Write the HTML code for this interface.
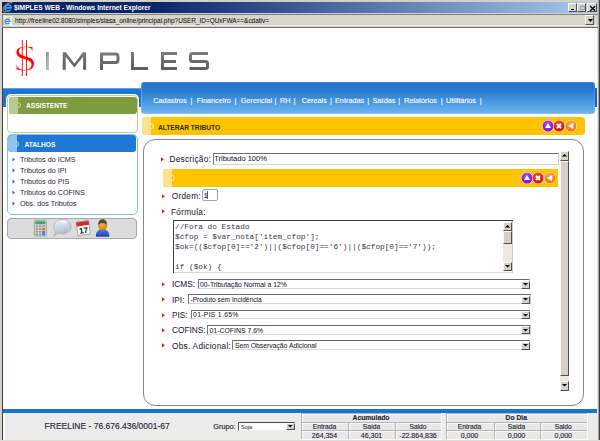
<!DOCTYPE html>
<html><head><meta charset="utf-8">
<style>
*{box-sizing:border-box}
html,body{margin:0;padding:0;width:600px;height:441px;overflow:hidden;background:#d4d0c8;font-family:"Liberation Sans",sans-serif}
.a{position:absolute}
.t{position:absolute;white-space:pre;line-height:1}
.d{-webkit-text-stroke:0.15px currentColor}
.wb{background:#d4d0c8;border-top:1px solid #fafafa;border-left:1px solid #fafafa;border-right:1px solid #505050;border-bottom:1px solid #505050}
</style></head><body>
<!-- window chrome -->
<div class="a" style="left:0;top:0;width:600px;height:441px;background:#d4d0c8"></div>
<div class="a" style="left:2px;top:2px;width:596px;height:11px;background:linear-gradient(to right,#0a246a 0%,#0a246a 25%,#a6caf0 100%)"></div>
<!-- title icon -->
<svg class="a" style="left:0.8px;top:1px" width="12" height="12" viewBox="0 0 12 12">
  <path d="M3.9 6.9H10.1A3.1 3.1 0 1 0 9.4 8.9" fill="none" stroke="#3a9cf0" stroke-width="1.7"/>
  <path d="M11.3 1.6C8 1.2 2.6 3.8 2.1 8.6C1.9 10.8 3.4 11.6 5.2 11" fill="none" stroke="#e8a818" stroke-width="0.9"/>
</svg>
<div class="t" style="left:14px;top:4.5px;font-size:6.7px;font-weight:bold;color:#fff">$IMPLES WEB - Windows Internet Explorer</div>
<!-- caption buttons -->
<div class="a wb" style="left:568px;top:3px;width:9px;height:9px"><div class="a" style="left:1.5px;top:4.6px;width:3.5px;height:1.3px;background:#000"></div></div>
<div class="a wb" style="left:577px;top:3px;width:9px;height:9px"><div class="a" style="left:1.5px;top:1.5px;width:5px;height:4.5px;border:1px solid #a0a0a0;border-top-width:1.5px"></div></div>
<div class="a wb" style="left:587px;top:3px;width:10px;height:9px"><svg class="a" style="left:0.5px;top:0.5px" width="8" height="7" viewBox="0 0 8 7"><path d="M1.3 1.3L6.2 5.7M6.2 1.3L1.3 5.7" stroke="#000" stroke-width="1.3"/></svg></div>
<!-- address bar -->
<div class="a" style="left:2px;top:14px;width:596px;height:1px;background:#808080"></div>
<div class="a" style="left:2px;top:14px;width:1px;height:13px;background:#808080"></div>
<div class="a" style="left:3px;top:15px;width:594px;height:10px;background:#d8d5ce"></div>
<div class="a" style="left:3px;top:25px;width:594px;height:1px;background:#eeece6"></div>
<div class="a" style="left:2px;top:26.5px;width:596px;height:1.5px;background:#707070"></div>
<div class="a" style="left:4px;top:16px;width:8px;height:9px;background:#f4f4f4"></div>
<svg class="a" style="left:2px;top:16px" width="10" height="10" viewBox="0 0 10 10">
  <path d="M3.2 5.3H7.8A2.4 2.4 0 1 0 7.3 6.9" fill="none" stroke="#3090e8" stroke-width="1.3"/>
  <path d="M8.8 1.6C6.2 1.3 2.2 3.2 1.7 6.9C1.5 8.6 2.7 9.2 4.1 8.8" fill="none" stroke="#e8a818" stroke-width="0.8"/>
</svg>
<div class="t" style="left:15px;top:18.1px;font-size:6.43px;color:#111;-webkit-text-stroke:0.05px #111">http://freeline02:8080/simples/siasa_online/principal.php?USER_ID=QUxFWA==&amp;cdativ=</div>
<div class="a wb" style="left:585px;top:15px;width:9px;height:10px"><svg class="a" style="left:1.5px;top:3px" width="5" height="3" viewBox="0 0 5 3"><path d="M0 0H5L2.5 3z" fill="#000"/></svg></div>
<!-- page area -->
<div class="a" style="left:2px;top:28px;width:1px;height:412px;background:#404040"></div>
<div class="a" style="left:3px;top:28px;width:594px;height:412px;background:#fff"></div>
<div class="a" style="left:597px;top:28px;width:1px;height:412px;background:#e8e5de"></div><div class="a" style="left:598px;top:0px;width:1px;height:441px;background:#a8a8a8"></div><div class="a" style="left:599px;top:0px;width:1px;height:441px;background:#404040"></div>
<div class="a" style="left:0;top:440px;width:600px;height:1px;background:#dedbd3"></div>

<!-- CONTENT -->
<!-- logo -->
<svg class="a" style="left:14px;top:38px" width="200" height="40" viewBox="14 38 200 40">
  <defs>
    <linearGradient id="lg" x1="0" y1="0" x2="0" y2="1"><stop offset="0" stop-color="#7a7a7a"/><stop offset="1" stop-color="#5e5e5e"/></linearGradient>
    <linearGradient id="lgi" x1="0" y1="0" x2="1" y2="1"><stop offset="0" stop-color="#909090"/><stop offset="1" stop-color="#c8c8c8"/></linearGradient>
  </defs>
  <!-- dollar -->
  <rect x="46" y="52" width="3" height="18" fill="url(#lgi)"/>
  <path d="M62.7 69.7V52.3H65.9L74.4 63.6L82.9 52.3H86.1V69.7H83.1V56.8L74.4 67.6L65.7 56.8V69.7Z" fill="url(#lg)"/>
  <g fill="none" stroke="url(#lg)" stroke-width="3" stroke-linejoin="miter">
    
    <path d="M101.5 70V54H115.5Q118 54 118 56.5V60Q118 62.5 115.5 62.5H101.5"/>
    <path d="M132.5 52V68.5H148"/>
    <path d="M177 53.5H162.5V68.5H177M162.5 61.5H176"/>
    <path d="M208 53.5H192.5Q190.5 53.5 190.5 55.5V59.5Q190.5 61.5 192.5 61.5H205.5Q207.5 61.5 207.5 63.5V66.5Q207.5 68.5 205.5 68.5H189.5"/>
  </g>
</svg>

<div class="t" style="left:13.2px;top:40px;font-family:&quot;Liberation Serif&quot;,serif;font-size:37px;color:#f00;-webkit-text-stroke:0.85px #fff;paint-order:normal;transform:scaleX(1.18);transform-origin:0 0">S</div>
<svg class="a" style="left:0;top:0" width="40" height="80"><path d="M22.3 40V76M26.5 40V76" stroke="#ff0000" stroke-width="0.9" fill="none"/></svg>
<!-- sidebar -->
<div class="a" style="left:3px;top:88px;width:138px;height:19px;background:#1e74d2;border-top:1.5px solid #64a0dc"></div>
<div class="a" style="left:6px;top:94px;width:133px;height:40px;background:#fff;border-radius:5px"></div>
<div class="a" style="left:7px;top:95px;width:131px;height:38px;border:1px solid #c6cc9c;border-radius:4px;background:#fff"></div>
<div class="a" style="left:9px;top:96.5px;width:127.5px;height:17.6px;background:#7d9c3b;border-radius:3px"></div>
<div class="a" style="left:9px;top:96.5px;width:9px;height:17.6px;background:#b9ca8c;border-radius:3px 0 0 3px"></div>
<div class="a" style="left:15px;top:102px;width:6px;height:6px;border:1px solid #d6e0b4;border-radius:50%;clip-path:inset(0 0 0 50%)"></div>
<div class="t" style="left:26px;top:103.2px;font-size:6.6px;font-weight:bold;color:#fff">ASSISTENTE</div>

<div class="a" style="left:7px;top:134px;width:131px;height:81px;border:1px solid #8cbcec;border-radius:5px;background:#fff"></div>
<div class="a" style="left:7.6px;top:135.3px;width:128.9px;height:17.2px;background:#1f78d6;border-radius:4px 3px 3px 3px"></div>
<div class="a" style="left:7.6px;top:135.3px;width:9.2px;height:17.2px;background:#8ec2f0;border-radius:4px 0 0 3px"></div>
<div class="a" style="left:13px;top:141px;width:6px;height:6px;border:1px solid #b4d6f4;border-radius:50%;clip-path:inset(0 0 0 50%)"></div>
<div class="t" style="left:24.5px;top:142px;font-size:6.6px;font-weight:bold;color:#fff">ATALHOS</div>
<div id="atalhos"><svg class="a" style="left:11.5px;top:156.7px" width="4" height="5"><path d="M0.5 0.5L3 2.5L0.5 4.5z" fill="#1f6fd0"/></svg><div class="t" style="left:20px;top:155.7px;font-size:7.2px;color:#2c2438">Tributos do ICMS</div><svg class="a" style="left:11.5px;top:167.7px" width="4" height="5"><path d="M0.5 0.5L3 2.5L0.5 4.5z" fill="#1f6fd0"/></svg><div class="t" style="left:20px;top:166.7px;font-size:7.2px;color:#2c2438">Tributos do IPI</div><svg class="a" style="left:11.5px;top:178.5px" width="4" height="5"><path d="M0.5 0.5L3 2.5L0.5 4.5z" fill="#1f6fd0"/></svg><div class="t" style="left:20px;top:177.5px;font-size:7.2px;color:#2c2438">Tributos do PIS</div><svg class="a" style="left:11.5px;top:189.7px" width="4" height="5"><path d="M0.5 0.5L3 2.5L0.5 4.5z" fill="#1f6fd0"/></svg><div class="t" style="left:20px;top:188.7px;font-size:7.2px;color:#2c2438">Tributos do COFINS</div><svg class="a" style="left:11.5px;top:200.5px" width="4" height="5"><path d="M0.5 0.5L3 2.5L0.5 4.5z" fill="#1f6fd0"/></svg><div class="t" style="left:20px;top:199.5px;font-size:7.2px;color:#2c2438">Obs. dos Tributos</div></div>

<!-- toolbar -->
<div class="a" style="left:7px;top:218px;width:130px;height:20.5px;background:#dcdcdc;border:1px solid #a8a8a8;border-radius:4px"></div>
<div id="icons"><svg class="a" style="left:30px;top:216px" width="84" height="24" viewBox="30 216 84 24">
<defs>
<linearGradient id="bub" x1="0" y1="0" x2="0.3" y2="1"><stop offset="0" stop-color="#f4f8fc"/><stop offset="0.6" stop-color="#c4d2e0"/><stop offset="1" stop-color="#a8b8c8"/></linearGradient>
<linearGradient id="usr" x1="0" y1="0" x2="0" y2="1"><stop offset="0" stop-color="#4a80e8"/><stop offset="1" stop-color="#1a40b0"/></linearGradient>
<radialGradient id="hd" cx="0.45" cy="0.4" r="0.6"><stop offset="0" stop-color="#f8b040"/><stop offset="1" stop-color="#d07810"/></radialGradient>
</defs>
<!-- calculator -->
<rect x="34.3" y="220.2" width="12" height="15.8" rx="1" fill="#d4d4d4" stroke="#8a8a8a" stroke-width="0.7"/>
<rect x="35.3" y="221.3" width="10" height="3" rx="0.8" fill="#30b060"/>
<g fill="#9a9a9a">
<rect x="35.6" y="225.4" width="2.4" height="1.8"/><rect x="38.9" y="225.4" width="2.4" height="1.8"/><rect x="42.2" y="225.4" width="2.6" height="1.8"/>
<rect x="35.6" y="228.1" width="2.4" height="1.8"/><rect x="38.9" y="228.1" width="2.4" height="1.8"/>
<rect x="35.6" y="230.8" width="2.4" height="1.8"/><rect x="38.9" y="230.8" width="2.4" height="1.8"/>
<rect x="35.6" y="233.5" width="2.4" height="1.8"/><rect x="38.9" y="233.5" width="2.4" height="1.8"/>
</g>
<rect x="42.2" y="228" width="2.8" height="2" fill="#f07010"/>
<rect x="42.2" y="230.7" width="2.8" height="4.7" fill="#5080d0"/>
<!-- bubble -->
<path d="M62.5 219.3C67.3 219.3 71 222.5 71 226.6C71 230.7 67.3 233.9 62.5 233.9C61 233.9 59.6 233.6 58.4 233.1L53.8 236.2L55.6 231.7C54.6 230.3 54 228.5 54 226.6C54 222.5 57.7 219.3 62.5 219.3Z" fill="url(#bub)" stroke="#d0a090" stroke-width="0.8"/>
<ellipse cx="64" cy="222" rx="3" ry="1.3" fill="#fff" opacity="0.7"/>
<!-- calendar -->
<g transform="rotate(-8 83 228)">
<rect x="77" y="221.5" width="12.5" height="13.5" fill="#fafafa" stroke="#808080" stroke-width="0.6"/>
<rect x="77" y="221.5" width="12.5" height="4.2" fill="#d42a2a"/>
<rect x="78.8" y="219.8" width="0.9" height="3" fill="#909090"/><rect x="86.6" y="219.8" width="0.9" height="3" fill="#909090"/>
<text x="83.3" y="233.3" font-family="Liberation Sans" font-weight="bold" font-size="8" text-anchor="middle" fill="#111">17</text>
</g>
<!-- user -->
<path d="M95.8 236.8C95.8 232 98 229.3 102.6 229.3C107.2 229.3 109.4 232 109.4 236.8Z" fill="url(#usr)"/>
<circle cx="102.6" cy="226.2" r="4.3" fill="url(#hd)"/>
<path d="M98.1 225.3C98.1 221.2 100 219.2 102.6 219.2C105.2 219.2 107.1 221.2 107.1 225.3C106 223.5 104.5 223 102.6 223C100.7 223 99.2 223.5 98.1 225.3Z" fill="#4a4a4a"/>
</svg></div>

<!-- nav -->
<div class="a" style="left:141px;top:82px;width:454px;height:32.4px;border-radius:3px;box-shadow:inset 1px 0 rgba(255,255,255,0.25),inset -1px 0 rgba(255,255,255,0.15);background:linear-gradient(#4a8ad8 0px,#2676cd 1.5px,#2a7ad0 9px,#68b3ee 30.4px,#a4cef2 32.4px)"></div>
<div class="a" style="left:595px;top:88px;width:2px;height:19px;background:#1a64be"></div>
<div id="nav"><div class="t" style="left:153.3px;top:96.7px;font-size:7.3px;color:#fff;-webkit-text-stroke:0.12px #fff">Cadastros</div><div class="t" style="left:190.5px;top:96.7px;font-size:7.3px;color:#fff;-webkit-text-stroke:0.12px #fff">|</div><div class="t" style="left:196.8px;top:96.7px;font-size:7.3px;color:#fff;-webkit-text-stroke:0.12px #fff">Financeiro</div><div class="t" style="left:234.5px;top:96.7px;font-size:7.3px;color:#fff;-webkit-text-stroke:0.12px #fff">|</div><div class="t" style="left:240.8px;top:96.7px;font-size:7.3px;color:#fff;-webkit-text-stroke:0.12px #fff">Gerencial</div><div class="t" style="left:274.5px;top:96.7px;font-size:7.3px;color:#fff;-webkit-text-stroke:0.12px #fff">|</div><div class="t" style="left:280px;top:96.7px;font-size:7.3px;color:#fff;-webkit-text-stroke:0.12px #fff">RH</div><div class="t" style="left:293.5px;top:96.7px;font-size:7.3px;color:#fff;-webkit-text-stroke:0.12px #fff">|</div><div class="t" style="left:301.7px;top:96.7px;font-size:7.3px;color:#fff;-webkit-text-stroke:0.12px #fff">Cereais</div><div class="t" style="left:330.0px;top:96.7px;font-size:7.3px;color:#fff;-webkit-text-stroke:0.12px #fff">|</div><div class="t" style="left:335px;top:96.7px;font-size:7.3px;color:#fff;-webkit-text-stroke:0.12px #fff">Entradas</div><div class="t" style="left:367.3px;top:96.7px;font-size:7.3px;color:#fff;-webkit-text-stroke:0.12px #fff">|</div><div class="t" style="left:372.7px;top:96.7px;font-size:7.3px;color:#fff;-webkit-text-stroke:0.12px #fff">Saídas</div><div class="t" style="left:398.3px;top:96.7px;font-size:7.3px;color:#fff;-webkit-text-stroke:0.12px #fff">|</div><div class="t" style="left:404px;top:96.7px;font-size:7.3px;color:#fff;-webkit-text-stroke:0.12px #fff">Relatórios</div><div class="t" style="left:440.7px;top:96.7px;font-size:7.3px;color:#fff;-webkit-text-stroke:0.12px #fff">|</div><div class="t" style="left:446px;top:96.7px;font-size:7.3px;color:#fff;-webkit-text-stroke:0.12px #fff">Utilitários</div><div class="t" style="left:479.7px;top:96.7px;font-size:7.3px;color:#fff;-webkit-text-stroke:0.12px #fff">|</div></div>

<!-- yellow title bar -->
<div class="a" style="left:142px;top:117px;width:443px;height:17.5px;background:#ffc400;border-radius:4px"></div>
<div class="a" style="left:142px;top:117px;width:9px;height:17.5px;background:#ffe08c;border-radius:4px 0 0 4px"></div>
<div class="a" style="left:148px;top:123px;width:6px;height:6px;border:1px solid #fff0c0;border-radius:50%;clip-path:inset(0 0 0 50%)"></div>
<div class="t" style="left:158px;top:125.2px;font-size:6.6px;font-weight:bold;color:#2a2a2a">ALTERAR TRIBUTO</div>
<div id="ic1"><svg class="a" style="left:540.5px;top:119.3px" width="14" height="14" viewBox="-7 -7 14 14"><defs><radialGradient id="g547126" cx="0.45" cy="0.3" r="0.75"><stop offset="0" stop-color="#b850ff"/><stop offset="1" stop-color="#7008c8"/></radialGradient></defs><circle r="6.1" fill="#fff8c8"/><circle r="5.5" fill="url(#g547126)"/><path d="M-3 2H3L0 -2.8z" fill="#fff"/></svg><svg class="a" style="left:552.3px;top:119.3px" width="14" height="14" viewBox="-7 -7 14 14"><defs><radialGradient id="g559126" cx="0.45" cy="0.3" r="0.75"><stop offset="0" stop-color="#ff4a3a"/><stop offset="1" stop-color="#c80e0e"/></radialGradient></defs><circle r="6.1" fill="#fff8c8"/><circle r="5.5" fill="url(#g559126)"/><path d="M-2 -2L2 2M2 -2L-2 2" stroke="#fff" stroke-width="1.8"/></svg><svg class="a" style="left:564.1px;top:119.3px" width="14" height="14" viewBox="-7 -7 14 14"><defs><radialGradient id="g571126" cx="0.45" cy="0.3" r="0.75"><stop offset="0" stop-color="#ffa848"/><stop offset="1" stop-color="#f06a0a"/></radialGradient></defs><circle r="6.1" fill="#fff8c8"/><circle r="5.5" fill="url(#g571126)"/><path d="M2.2 -2.9V2.9L-2.9 0z" fill="#fff"/></svg></div>

<!-- main box -->
<div class="a" style="left:142.5px;top:139px;width:441.5px;height:266.5px;border:1.5px solid #888;border-radius:12px;background:#fff"></div>
<div id="main"><div class="a" style="left:560px;top:150.5px;width:9px;height:240px;background:#ece9e2"></div><div class="a wb" style="left:560px;top:150.5px;width:9px;height:10px"></div><svg class="a" style="left:562.0px;top:154.2px" width="5" height="3"><path d="M0 2.6H5L2.5 0z" fill="#000"/></svg><div class="a wb" style="left:560px;top:160.5px;width:9px;height:215px"></div><div class="a wb" style="left:560px;top:380.5px;width:9px;height:10px"></div><svg class="a" style="left:562.0px;top:384.2px" width="5" height="3"><path d="M0 0H5L2.5 2.6z" fill="#000"/></svg><svg class="a" style="left:161.2px;top:156.70px" width="4" height="5"><path d="M0 0.2L2.8 2.3L0 4.4z" fill="#e81010"/></svg><div class="t" style="left:169.4px;top:155.15px;font-size:8.3px;letter-spacing:0.25px;color:#26243a;-webkit-text-stroke:0.05px #26243a">Descrição:</div><div class="a" style="left:212.5px;top:153.3px;width:346.0px;height:11.399999999999977px;background:#fff;border-top:1.5px solid #6a6a6a;border-left:1px solid #7a7a7a;border-bottom:1px solid #d8d8d8;border-right:1px solid #c8c8c8"></div><div class="t" style="left:214.2px;top:155.20px;font-size:7.5px;color:#202030;-webkit-text-stroke:0.05px #202030">Tributado 100%</div><div class="a" style="left:163px;top:169px;width:395px;height:18px;background:#ffc400;border-radius:3px 0 0 3px"></div><div class="a" style="left:163px;top:169px;width:8.5px;height:18px;background:#ffe08c;border-radius:3px 0 0 3px"></div><div class="a" style="left:168.5px;top:175px;width:6px;height:6px;border:1px solid #fff0c0;border-radius:50%;clip-path:inset(0 0 0 50%)"></div><div id="ic2"><svg class="a" style="left:519.7px;top:171px" width="14" height="14" viewBox="-7 -7 14 14"><defs><radialGradient id="g526178" cx="0.45" cy="0.3" r="0.75"><stop offset="0" stop-color="#b850ff"/><stop offset="1" stop-color="#7008c8"/></radialGradient></defs><circle r="6.1" fill="#fff8c8"/><circle r="5.5" fill="url(#g526178)"/><path d="M-3 2H3L0 -2.8z" fill="#fff"/></svg><svg class="a" style="left:531.35px;top:171px" width="14" height="14" viewBox="-7 -7 14 14"><defs><radialGradient id="g538178" cx="0.45" cy="0.3" r="0.75"><stop offset="0" stop-color="#ff4a3a"/><stop offset="1" stop-color="#c80e0e"/></radialGradient></defs><circle r="6.1" fill="#fff8c8"/><circle r="5.5" fill="url(#g538178)"/><path d="M-2 -2L2 2M2 -2L-2 2" stroke="#fff" stroke-width="1.8"/></svg><svg class="a" style="left:543.0px;top:171px" width="14" height="14" viewBox="-7 -7 14 14"><defs><radialGradient id="g550178" cx="0.45" cy="0.3" r="0.75"><stop offset="0" stop-color="#ffa848"/><stop offset="1" stop-color="#f06a0a"/></radialGradient></defs><circle r="6.1" fill="#fff8c8"/><circle r="5.5" fill="url(#g550178)"/><path d="M2.2 -2.9V2.9L-2.9 0z" fill="#fff"/></svg></div><svg class="a" style="left:162.2px;top:193.50px" width="4" height="5"><path d="M0 0.2L2.8 2.3L0 4.4z" fill="#e81010"/></svg><div class="t" style="left:171.7px;top:191.95px;font-size:8.3px;letter-spacing:0.25px;color:#26243a;-webkit-text-stroke:0.05px #26243a">Ordem:</div><div class="a" style="left:202px;top:189.3px;width:15.6px;height:11.8px;background:#fff;border:1.2px solid #a4a4a4;border-radius:2px"></div><div class="t" style="left:203.7px;top:192.3px;font-size:7.5px;color:#2a2838;-webkit-text-stroke:0.15px #2a2838">1</div><div class="a" style="left:207.4px;top:191px;width:0.9px;height:7.7px;background:#606060"></div><svg class="a" style="left:162.2px;top:209.40px" width="4" height="5"><path d="M0 0.2L2.8 2.3L0 4.4z" fill="#e81010"/></svg><div class="t" style="left:171px;top:207.85px;font-size:8.3px;letter-spacing:0.25px;color:#26243a;-webkit-text-stroke:0.05px #26243a">Fórmula:</div><div class="a" style="left:173.3px;top:220.4px;width:339.90000000000003px;height:52.20000000000002px;background:#fff;border-top:1.5px solid #6a6a6a;border-left:1px solid #7a7a7a;border-bottom:1px solid #d8d8d8;border-right:1px solid #c8c8c8"></div><div class="a" style="left:173.3px;top:220.4px;width:339.9px;height:52.2px;border-top:1px solid #404040;border-left:1px solid #404040"></div><div class="t" style="left:175px;top:224.40px;font-family:'Liberation Mono',monospace;font-size:7.78px;color:#383848">//Fora do Estado</div><div class="t" style="left:175px;top:234.28px;font-family:'Liberation Mono',monospace;font-size:7.78px;color:#383848">$cfop = $var_nota['item_cfop'];</div><div class="t" style="left:175px;top:244.15px;font-family:'Liberation Mono',monospace;font-size:7.78px;color:#383848">$ok=(($cfop[0]=='2')||($cfop[0]=='6')||($cfop[0]=='7'));</div><div class="t" style="left:175px;top:254.02px;font-family:'Liberation Mono',monospace;font-size:7.78px;color:#383848"></div><div class="t" style="left:175px;top:263.90px;font-family:'Liberation Mono',monospace;font-size:7.78px;color:#383848">if ($ok) {</div><div class="a" style="left:503px;top:222px;width:9px;height:49px;background:#ece9e2"></div><div class="a wb" style="left:503px;top:222px;width:9px;height:9px"></div><svg class="a" style="left:505.0px;top:225.2px" width="5" height="3"><path d="M0 2.6H5L2.5 0z" fill="#000"/></svg><div class="a wb" style="left:503px;top:231px;width:9px;height:13px"></div><div class="a wb" style="left:503px;top:262px;width:9px;height:9px"></div><svg class="a" style="left:505.0px;top:265.2px" width="5" height="3"><path d="M0 0H5L2.5 2.6z" fill="#000"/></svg><svg class="a" style="left:162.2px;top:281.70px" width="4" height="5"><path d="M0 0.2L2.8 2.3L0 4.4z" fill="#e81010"/></svg><div class="t" style="left:172px;top:280.15000000000003px;font-size:8.3px;letter-spacing:0px;color:#26243a;-webkit-text-stroke:0.05px #26243a">ICMS:</div><div class="a" style="left:197.6px;top:279.2px;width:332.9px;height:9.600000000000023px;background:#fff;border-top:1.5px solid #6a6a6a;border-left:1px solid #7a7a7a;border-bottom:1px solid #d8d8d8;border-right:1px solid #c8c8c8"></div><div class="t" style="left:200.1px;top:281.90px;font-size:6.8px;color:#202030;-webkit-text-stroke:0.05px #202030">00-Tributação Normal a 12%</div><div class="a wb" style="left:521px;top:280.5px;width:8.7px;height:8px"></div><svg class="a" style="left:522.85px;top:283.2px" width="5" height="3"><path d="M0 0H5L2.5 2.6z" fill="#000"/></svg><svg class="a" style="left:162.2px;top:297.30px" width="4" height="5"><path d="M0 0.2L2.8 2.3L0 4.4z" fill="#e81010"/></svg><div class="t" style="left:172px;top:295.75000000000006px;font-size:8.3px;letter-spacing:0px;color:#26243a;-webkit-text-stroke:0.05px #26243a">IPI:</div><div class="a" style="left:188px;top:294.3px;width:342.5px;height:9.600000000000023px;background:#fff;border-top:1.5px solid #6a6a6a;border-left:1px solid #7a7a7a;border-bottom:1px solid #d8d8d8;border-right:1px solid #c8c8c8"></div><div class="t" style="left:190.5px;top:297.00px;font-size:6.6px;color:#202030;-webkit-text-stroke:0.05px #202030">-Produto sem Incidência</div><div class="a wb" style="left:521px;top:295.6px;width:8.7px;height:8px"></div><svg class="a" style="left:522.85px;top:298.3px" width="5" height="3"><path d="M0 0H5L2.5 2.6z" fill="#000"/></svg><svg class="a" style="left:162.2px;top:312.50px" width="4" height="5"><path d="M0 0.2L2.8 2.3L0 4.4z" fill="#e81010"/></svg><div class="t" style="left:172px;top:310.95000000000005px;font-size:8.3px;letter-spacing:0px;color:#26243a;-webkit-text-stroke:0.05px #26243a">PIS:</div><div class="a" style="left:190.6px;top:309.6px;width:339.9px;height:9.600000000000023px;background:#fff;border-top:1.5px solid #6a6a6a;border-left:1px solid #7a7a7a;border-bottom:1px solid #d8d8d8;border-right:1px solid #c8c8c8"></div><div class="t" style="left:193.1px;top:312.30px;font-size:6.8px;letter-spacing:0.3px;color:#202030;-webkit-text-stroke:0.05px #202030">01-PIS 1.65%</div><div class="a wb" style="left:521px;top:310.90000000000003px;width:8.7px;height:8px"></div><svg class="a" style="left:522.85px;top:313.6px" width="5" height="3"><path d="M0 0H5L2.5 2.6z" fill="#000"/></svg><svg class="a" style="left:162.2px;top:327.90px" width="4" height="5"><path d="M0 0.2L2.8 2.3L0 4.4z" fill="#e81010"/></svg><div class="t" style="left:172px;top:326.35px;font-size:8.3px;letter-spacing:0px;color:#26243a;-webkit-text-stroke:0.05px #26243a">COFINS:</div><div class="a" style="left:207px;top:325px;width:323.5px;height:9.600000000000023px;background:#fff;border-top:1.5px solid #6a6a6a;border-left:1px solid #7a7a7a;border-bottom:1px solid #d8d8d8;border-right:1px solid #c8c8c8"></div><div class="t" style="left:209.5px;top:327.70px;font-size:6.9px;color:#202030;-webkit-text-stroke:0.05px #202030">01-COFINS 7.6%</div><div class="a wb" style="left:521px;top:326.3px;width:8.7px;height:8px"></div><svg class="a" style="left:522.85px;top:329.0px" width="5" height="3"><path d="M0 0H5L2.5 2.6z" fill="#000"/></svg><svg class="a" style="left:162.2px;top:343.10px" width="4" height="5"><path d="M0 0.2L2.8 2.3L0 4.4z" fill="#e81010"/></svg><div class="t" style="left:172px;top:341.55px;font-size:8.3px;letter-spacing:0.25px;color:#26243a;-webkit-text-stroke:0.05px #26243a">Obs. Adicional:</div><div class="a" style="left:232.4px;top:340.3px;width:298.1px;height:9.600000000000023px;background:#fff;border-top:1.5px solid #6a6a6a;border-left:1px solid #7a7a7a;border-bottom:1px solid #d8d8d8;border-right:1px solid #c8c8c8"></div><div class="t" style="left:234.9px;top:343.00px;font-size:6.8px;color:#202030;-webkit-text-stroke:0.05px #202030">Sem Observação Adicional</div><div class="a wb" style="left:521px;top:341.6px;width:8.7px;height:8px"></div><svg class="a" style="left:522.85px;top:344.3px" width="5" height="3"><path d="M0 0H5L2.5 2.6z" fill="#000"/></svg></div>

<!-- footer -->
<div class="a" style="left:3px;top:409px;width:594px;height:3.5px;background:#1c72d0"></div>
<div class="a" style="left:3px;top:412.5px;width:594px;height:27.5px;background:#ebebeb;border-left:2px solid #f6f6f6"></div>
<div id="footer"><div class="t" style="left:44.6px;top:422px;font-size:8.5px;color:#2a2838;-webkit-text-stroke:0.15px #2a2838">FREELINE - 76.676.436/0001-67</div><div class="t" style="left:213.3px;top:423px;font-size:7.3px;color:#2a2838;-webkit-text-stroke:0.15px #2a2838">Grupo:</div><div class="a" style="left:238.3px;top:421.8px;width:57px;height:8.8px;background:#fff;border-top:1.5px solid #484848;border-left:1.5px solid #585858;border-bottom:1px solid #f0f0f0;border-right:1px solid #f0f0f0"></div><div class="t" style="left:241px;top:424.6px;font-size:5.6px;color:#1a1a2a">Soja</div><div class="a wb" style="left:285.5px;top:423.2px;width:9px;height:6.6px"></div><svg class="a" style="left:287.8px;top:425.4px" width="5" height="3"><path d="M0 0H4.5L2.25 2.4z" fill="#000"/></svg><div class="a" style="left:301px;top:413px;width:141px;height:27px;border-right:1px solid #fafafa;border-bottom:1px solid #fafafa;background:#b4b4b4"></div><div class="a" style="left:301px;top:413px;width:140px;height:8.800000000000011px;border-left:1px solid #b4b4b4;border-top:1px solid #b4b4b4;box-shadow:inset 1px 1px #fafafa;background:#e8e8e8"></div><div class="t" style="left:301px;top:415.00px;width:140px;text-align:center;font-size:6.8px;font-weight:bold;color:#2a2838;-webkit-text-stroke:0.15px #2a2838">Acumulado</div><div class="a" style="left:301px;top:421.8px;width:47px;height:8.399999999999977px;border-left:1px solid #b4b4b4;border-top:1px solid #b4b4b4;box-shadow:inset 1px 1px #fafafa;background:#e8e8e8"></div><div class="t" style="left:301px;top:424.25px;width:47px;text-align:center;font-size:6.7px;font-weight:normal;color:#2a2838;-webkit-text-stroke:0.15px #2a2838">Entrada</div><div class="a" style="left:301px;top:430.2px;width:47px;height:8.800000000000011px;border-left:1px solid #b4b4b4;border-top:1px solid #b4b4b4;box-shadow:inset 1px 1px #fafafa;background:#e8e8e8"></div><div class="t" style="left:301px;top:431.60px;width:47px;text-align:center;font-size:7.0px;font-weight:normal;color:#2a2838;-webkit-text-stroke:0.15px #2a2838">264,354</div><div class="a" style="left:348px;top:421.8px;width:47px;height:8.399999999999977px;border-left:1px solid #b4b4b4;border-top:1px solid #b4b4b4;box-shadow:inset 1px 1px #fafafa;background:#e8e8e8"></div><div class="t" style="left:348px;top:424.25px;width:47px;text-align:center;font-size:6.7px;font-weight:normal;color:#2a2838;-webkit-text-stroke:0.15px #2a2838">Saída</div><div class="a" style="left:348px;top:430.2px;width:47px;height:8.800000000000011px;border-left:1px solid #b4b4b4;border-top:1px solid #b4b4b4;box-shadow:inset 1px 1px #fafafa;background:#e8e8e8"></div><div class="t" style="left:348px;top:431.60px;width:47px;text-align:center;font-size:7.0px;font-weight:normal;color:#2a2838;-webkit-text-stroke:0.15px #2a2838">46,301</div><div class="a" style="left:395px;top:421.8px;width:46px;height:8.399999999999977px;border-left:1px solid #b4b4b4;border-top:1px solid #b4b4b4;box-shadow:inset 1px 1px #fafafa;background:#e8e8e8"></div><div class="t" style="left:395px;top:424.25px;width:46px;text-align:center;font-size:6.7px;font-weight:normal;color:#2a2838;-webkit-text-stroke:0.15px #2a2838">Saldo</div><div class="a" style="left:395px;top:430.2px;width:46px;height:8.800000000000011px;border-left:1px solid #b4b4b4;border-top:1px solid #b4b4b4;box-shadow:inset 1px 1px #fafafa;background:#e8e8e8"></div><div class="t" style="left:395px;top:431.60px;width:46px;text-align:center;font-size:7.0px;font-weight:normal;color:#2a2838;-webkit-text-stroke:0.15px #2a2838">-22.864,836</div><div class="a" style="left:445.5px;top:413px;width:142.5px;height:27px;border-right:1px solid #fafafa;border-bottom:1px solid #fafafa;background:#b4b4b4"></div><div class="a" style="left:445.5px;top:413px;width:141.5px;height:8.800000000000011px;border-left:1px solid #b4b4b4;border-top:1px solid #b4b4b4;box-shadow:inset 1px 1px #fafafa;background:#e8e8e8"></div><div class="t" style="left:445.5px;top:415.00px;width:141.5px;text-align:center;font-size:6.8px;font-weight:bold;color:#2a2838;-webkit-text-stroke:0.15px #2a2838">Do Dia</div><div class="a" style="left:445.5px;top:421.8px;width:48.0px;height:8.399999999999977px;border-left:1px solid #b4b4b4;border-top:1px solid #b4b4b4;box-shadow:inset 1px 1px #fafafa;background:#e8e8e8"></div><div class="t" style="left:445.5px;top:424.25px;width:48.0px;text-align:center;font-size:6.7px;font-weight:normal;color:#2a2838;-webkit-text-stroke:0.15px #2a2838">Entrada</div><div class="a" style="left:445.5px;top:430.2px;width:48.0px;height:8.800000000000011px;border-left:1px solid #b4b4b4;border-top:1px solid #b4b4b4;box-shadow:inset 1px 1px #fafafa;background:#e8e8e8"></div><div class="t" style="left:445.5px;top:431.60px;width:48.0px;text-align:center;font-size:7.0px;font-weight:normal;color:#2a2838;-webkit-text-stroke:0.15px #2a2838">0,000</div><div class="a" style="left:493.5px;top:421.8px;width:46.0px;height:8.399999999999977px;border-left:1px solid #b4b4b4;border-top:1px solid #b4b4b4;box-shadow:inset 1px 1px #fafafa;background:#e8e8e8"></div><div class="t" style="left:493.5px;top:424.25px;width:46.0px;text-align:center;font-size:6.7px;font-weight:normal;color:#2a2838;-webkit-text-stroke:0.15px #2a2838">Saída</div><div class="a" style="left:493.5px;top:430.2px;width:46.0px;height:8.800000000000011px;border-left:1px solid #b4b4b4;border-top:1px solid #b4b4b4;box-shadow:inset 1px 1px #fafafa;background:#e8e8e8"></div><div class="t" style="left:493.5px;top:431.60px;width:46.0px;text-align:center;font-size:7.0px;font-weight:normal;color:#2a2838;-webkit-text-stroke:0.15px #2a2838">0,000</div><div class="a" style="left:539.5px;top:421.8px;width:47.5px;height:8.399999999999977px;border-left:1px solid #b4b4b4;border-top:1px solid #b4b4b4;box-shadow:inset 1px 1px #fafafa;background:#e8e8e8"></div><div class="t" style="left:539.5px;top:424.25px;width:47.5px;text-align:center;font-size:6.7px;font-weight:normal;color:#2a2838;-webkit-text-stroke:0.15px #2a2838">Saldo</div><div class="a" style="left:539.5px;top:430.2px;width:47.5px;height:8.800000000000011px;border-left:1px solid #b4b4b4;border-top:1px solid #b4b4b4;box-shadow:inset 1px 1px #fafafa;background:#e8e8e8"></div><div class="t" style="left:539.5px;top:431.60px;width:47.5px;text-align:center;font-size:7.0px;font-weight:normal;color:#2a2838;-webkit-text-stroke:0.15px #2a2838">0,000</div></div>
</body></html>
